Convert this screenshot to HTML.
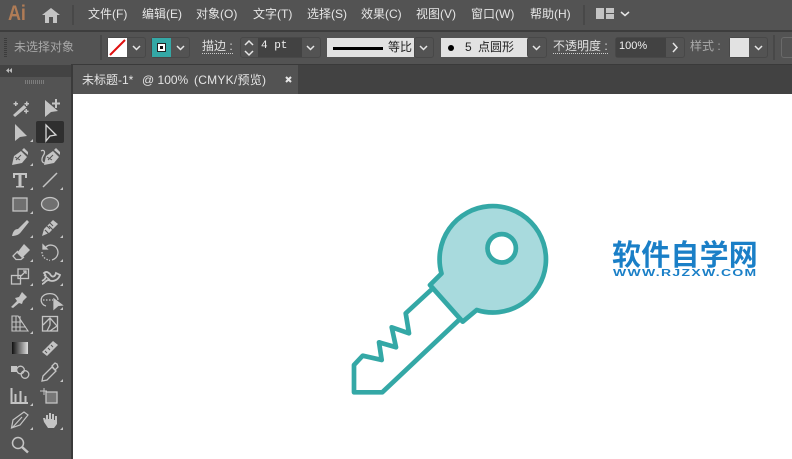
<!DOCTYPE html>
<html><head><meta charset="utf-8">
<style>
*{box-sizing:border-box}
html,body{margin:0;padding:0}
body{width:792px;height:459px;overflow:hidden;background:#fff;position:relative;font-family:"Liberation Sans","Noto Sans CJK SC",sans-serif;font-size:12px;color:#e6e6e6}
.a{position:absolute}
.t{position:absolute;white-space:nowrap;line-height:16px}
.box{position:absolute;border:1px solid #484848;border-radius:3px;background:#535353}
.lt{position:absolute;background:#e2e2e2}
.dk{position:absolute;background:#424242}
.sep{position:absolute;width:1px;background:#484848}
svg.i{position:absolute;left:0;top:0}
</style></head><body>
<div class="a" style="left:0;top:0;width:792px;height:30px;background:#535353"></div>
<div class="a" style="left:0;top:30px;width:792px;height:2px;background:#3d3d3d"></div>
<div class="a" style="left:0;top:32px;width:792px;height:32px;background:#535353"></div>
<div class="a" style="left:0;top:64px;width:792px;height:30px;background:#424242;border-top:1px solid #3a3a3a"></div>
<div class="a" style="left:73px;top:94px;width:719px;height:365px;background:#fff"></div>
<div class="a" style="left:0;top:64px;width:71px;height:395px;background:#535353"></div>
<div class="a" style="left:0;top:65px;width:71px;height:12px;background:#434343"></div>
<div class="a" style="left:71px;top:64px;width:2px;height:395px;background:#3a3a3a"></div>
<div class="a" style="left:73px;top:65px;width:225px;height:29px;background:#535353"></div>

<div class="t" style="left:8px;top:1px;font-size:21px;line-height:26px;font-weight:bold;color:#b07c56;transform:scaleX(.85);transform-origin:0 0">Ai</div>
<div class="t" style="left:88px;top:6px">文件(F)</div>
<div class="t" style="left:142px;top:6px">编辑(E)</div>
<div class="t" style="left:196px;top:6px">对象(O)</div>
<div class="t" style="left:253px;top:6px">文字(T)</div>
<div class="t" style="left:307px;top:6px">选择(S)</div>
<div class="t" style="left:361px;top:6px">效果(C)</div>
<div class="t" style="left:416px;top:6px">视图(V)</div>
<div class="t" style="left:471px;top:6px">窗口(W)</div>
<div class="t" style="left:530px;top:6px">帮助(H)</div>
<div class="sep" style="left:72px;top:5px;height:20px;width:2px"></div>
<div class="sep" style="left:583px;top:5px;height:20px;width:2px"></div>
<div class="lt" style="left:596px;top:8px;width:8px;height:11px;background:#c4c4c4"></div>
<div class="lt" style="left:606px;top:8px;width:8px;height:5px;background:#c4c4c4"></div>
<div class="lt" style="left:606px;top:14px;width:8px;height:5px;background:#c4c4c4"></div>

<div class="t" style="left:14px;top:39px;color:#a8a8a8">未选择对象</div>
<div class="sep" style="left:100px;top:35px;height:25px;width:2px"></div>
<div class="box" style="left:107px;top:37px;width:39px;height:21px"></div>
<div class="a" style="left:108px;top:38px;width:19px;height:19px;background:#fff"></div>
<div class="box" style="left:151px;top:37px;width:39px;height:21px"></div>
<div class="a" style="left:152px;top:38px;width:19px;height:19px;background:#34a8a6"></div>
<div class="a" style="left:158px;top:44px;width:7px;height:7px;background:#111;border:2px solid #fff;outline:1px solid #222"></div>
<div class="t" style="left:202px;top:39px;color:#e0e0e0;border-bottom:1px dotted #ccc;line-height:14px">描边 :</div>
<div class="box" style="left:240px;top:37px;width:81px;height:21px"></div>
<div class="dk" style="left:258px;top:38px;width:44px;height:19px"></div>
<div class="t" style="left:261px;top:38px;font-family:'Liberation Mono',monospace;font-size:11px;color:#f0f0f0">4 pt</div>
<div class="lt" style="left:327px;top:38px;width:87px;height:19px"></div>
<div class="a" style="left:333px;top:47px;width:50px;height:3px;background:#000"></div>
<div class="t" style="left:388px;top:39px;color:#222;font-size:12px;line-height:16px">等比</div>
<div class="box" style="left:414px;top:37px;width:20px;height:21px"></div>
<div class="lt" style="left:441px;top:38px;width:87px;height:19px"></div>
<div class="a" style="left:448px;top:45px;width:6px;height:6px;border-radius:50%;background:#000"></div>
<div class="t" style="left:465px;top:39px;color:#222;font-size:12px;line-height:16px;word-spacing:3px">5 点圆形</div>
<div class="box" style="left:527px;top:37px;width:20px;height:21px"></div>
<div class="t" style="left:553px;top:39px;color:#e0e0e0;border-bottom:1px dotted #ccc;line-height:14px">不透明度 :</div>
<div class="box" style="left:615px;top:37px;width:70px;height:21px"></div>
<div class="dk" style="left:616px;top:38px;width:50px;height:19px"></div>
<div class="t" style="left:619px;top:38px;font-size:11px;color:#f0f0f0">100%</div>
<div class="t" style="left:690px;top:39px;color:#a8a8a8;line-height:14px">样式 :</div>
<div class="box" style="left:729px;top:37px;width:39px;height:21px"></div>
<div class="lt" style="left:730px;top:38px;width:19px;height:19px"></div>
<div class="sep" style="left:773px;top:35px;height:25px;width:2px"></div>
<div class="box" style="left:781px;top:37px;width:20px;height:21px;background:none;border-color:#6a6a6a"></div>

<div class="t" style="left:82px;top:72px;color:#e4e4e4">未标题-1*</div>
<div class="t" style="left:142px;top:72px;color:#e4e4e4">@ 100%</div>
<div class="t" style="left:194px;top:72px;color:#e4e4e4;letter-spacing:.25px">(CMYK/预览)</div>

<svg class="i" width="792" height="459" viewBox="0 0 792 459" fill="none">
<path d="M42 15 51 8 60 15H57V23H53V17H49V23H45V15Z" fill="#c4c4c4"/>
<g stroke="#e6e6e6" stroke-width="1.500">
<path d="M621 12 625 15.500 629 12"/>
<path d="M133 46 136.500 49.500 140 46"/><path d="M177 46 180.500 49.500 184 46"/>
<path d="M307 46 310.500 49.500 314 46"/><path d="M420 46 423.500 49.500 427 46"/>
<path d="M533 46 536.500 49.500 540 46"/><path d="M755 46 758.500 49.500 762 46"/>
<path d="M245 45 249 41 253 45"/><path d="M245 51 249 55 253 51"/>
<path d="M673 43 677 47.500 673 52"/>
</g>
<path d="M110 55 125 40" stroke="#e01010" stroke-width="2"/>
<path d="M286 77 291 82M291 77 286 82" stroke="#e6e6e6" stroke-width="2"/>
<path d="M4 38.500H7M4 40.500H7M4 42.500H7M4 44.500H7M4 46.500H7M4 48.500H7M4 50.500H7M4 52.500H7M4 54.500H7M4 56.500H7" stroke="#3c3c3c"/>
<path d="M25.500 80V84M27.500 80V84M29.500 80V84M31.500 80V84M33.500 80V84M35.500 80V84M37.500 80V84M39.500 80V84M41.500 80V84M43.500 80V84" stroke="#7c7c7c"/>
<path d="M9 68 6 70.500 9 73ZM12 68 9 70.500 12 73Z" fill="#bbb"/>

<rect x="36" y="121" width="28" height="22" rx="2" fill="#2f2f2f"/>
<g fill="#c4c4c4">
<path d="M13 115 24 105 26.500 107.500 15 117Z"/>
<path d="M15 101.500h1.500v1.500h1.500v1.500h-1.500v1.500h-1.500v-1.500h-1.500v-1.500h1.500ZM26 101.500h1.500v1.500h1.500v1.500h-1.500v1.500h-1.500v-1.500h-1.500v-1.500h1.500ZM25.500 109h1.500v1.500h1.500v1.500h-1.500v1.500h-1.500v-1.500h-1.500v-1.500h1.500Z"/>
<path d="M45 100 58 111 51 112 45 117Z"/>
<path d="M55 99H57V102.500H60V104.500H57V108H55V104.500H52V102.500H55Z"/>
<path d="M15 124 27 136 20 137 15 141Z"/>
<path d="M12 165 14 156 21 151 27 157 22 163Z"/><path d="M22 150 24 148 28 152 28 155 Z"/>
<path d="M44 165 46 156 53 151 59 157 54 163Z"/><path d="M54 150 56 148 60 152 60 155 Z"/>
<path d="M13 173H27V178H25V175H21.500V186H24V187.500H16V186H18.500V175H15V178H13Z"/>
<path d="M12 236C13 231 15 229 18 229L27 220 29 222 21 232C19 235 15 236 12 236Z"/>
<path d="M42 236 44 229 53 220 58 224 49 233Z"/>
<path d="M17 253 24 244 30 250 22 258Z"/>
<path d="M11 307 17 301 15 298 19 297 22 292 27 297 23 301 22 304 19 303 13 308Z"/>
<path d="M12 342H28V354H12Z" fill="url(#gr)"/>
<path d="M42 352 53 341 58 345 47 356Z"/>
<path d="M11 366H17V372H11Z"/>
<path d="M44 422 43 418 45 418 46 420V415H48V419H49V413H51V419H52V414H54V420H55V416H57V424L54 428H48Z"/>
</g>
<defs><linearGradient id="gr"><stop offset="0" stop-color="#111"/><stop offset="1" stop-color="#ddd"/></linearGradient></defs>
<path d="M46 225 50 229M49 222 53 226" stroke="#535353"/>
<path d="M45 230 49 234M49 226 53 230" stroke="#535353" stroke-width="1.200"/>
<path d="M45 351 47 353M48 348 50 350M51 345 53 347" stroke="#535353"/>
<path d="M15 157 20 160M47 157 52 160" stroke="#535353"/>
<path d="M16 160 21 155M48 160 53 155" stroke="#535353" stroke-width="1"/>
<g stroke="#c4c4c4" stroke-width="1.300">
<path d="M46 125 56 135 50 136 46 141Z" stroke="#d8d8d8" fill="#2f2f2f"/>
<path d="M43 187 57 173" stroke-width="1.500"/>
<path d="M41 151C44 149 46 152 43 156 41 160 42 163 45 163"/>
<rect x="13" y="198" width="14" height="13" fill="#707070"/>
<ellipse cx="50" cy="204" rx="8.500" ry="6.500" fill="#707070"/>
<path d="M18 251 13 256 16 259.500H21L24 257" />
<path d="M46 247C49 244 57 244 58 252 58 257 55 259 52 260" /><path d="M43 245 47 249 H43Z" fill="#c4c4c4"/>
<path d="M42 252C42 256 44 259 50 260.500" stroke-dasharray="1.500 1.500"/>
<rect x="11.500" y="275.500" width="9" height="8.500"/><rect x="18" y="269" width="10.500" height="9.500"/>
<path d="M21 276 26 271M23 271H26V274"/>
<path d="M42 281C46 279 47 276 44 273 46 271 48 272 50 274 52 278 55 277 56 273 L60 275 C58 281 52 282 48 280 45 281 44 284 42 284" stroke-width="1.800"/>
<path d="M44 275 50 280"/>
<path d="M46 306C42 305 40 301 42 297 45 293 54 292 57 297 58 298 58 299 58 300"/>
<path d="M43 300H53" stroke-dasharray="1.500 1.500"/>
<path d="M54 299 62 305 58 305.500 54 309Z" fill="#c4c4c4"/>
<path d="M12 331V316H18L28 331ZM12 327H26M12 322H22M16 316V331M20 316V331" stroke-width="1.100"/>
<rect x="42.500" y="316.500" width="15" height="14.500"/><path d="M43 325 50 318 57 326 50 331M47 331 50 325 50 318"/>
<circle cx="20.500" cy="370" r="3.800"/><circle cx="25" cy="374.500" r="3.800"/>
<path d="M42 381 43 376 52 367 56 371 47 380ZM52 366 55 363 57 364 58 367 55 370Z"/>
<path d="M11.500 388V403H28M15.500 394V402M20.500 391V402M25.500 396V402" stroke-width="2"/>
<path d="M40 391H47M44 388V395" stroke-width="1"/><rect x="46" y="392" width="11" height="11" fill="#777"/>
<path d="M11.500 428 13 420 24 412 28 415 20 425ZM12 428 22 417" stroke-width="1.200"/>
<circle cx="18" cy="443" r="5.500" stroke-width="1.500"/><path d="M22 447 28 452.500" stroke-width="2.500"/>
</g>
<g stroke="#34a8a6" stroke-width="4.700" stroke-linejoin="round" stroke-linecap="round">
<path d="M441.500 273.500A53.200 53.200 0 1 1 476.700 310L462.700 321.700 430 285Z" fill="#a8dadd"/>
<circle cx="501.700" cy="248.300" r="14.200" fill="#fff"/>
<path d="M431.700 289.300 405.700 313.300 409 333.300 391.700 327.300 396 347.300 379 342.300 381.700 360 362.700 355.700 354 365V392.300H382.300L460 319"/>
</g>
<g fill="#c4c4c4">
<path d="M33 139V142H30Z"/><path d="M33 163V166H30Z"/><path d="M33 187V190H30Z"/><path d="M63 187V190H60Z"/>
<path d="M33 211V214H30Z"/><path d="M33 235V238H30Z"/><path d="M63 235V238H60Z"/><path d="M33 259V262H30Z"/><path d="M63 259V262H60Z"/>
<path d="M33 283V286H30Z"/><path d="M63 283V286H60Z"/><path d="M33 307V310H30Z"/><path d="M63 307V310H60Z"/>
<path d="M33 331V334H30Z"/><path d="M63 379V382H60Z"/><path d="M33 403V406H30Z"/><path d="M33 427V430H30Z"/><path d="M63 427V430H60Z"/>
</g>
</svg>

<div class="t" style="left:612px;top:236px;font-size:29px;line-height:34px;font-weight:bold;color:#1a7fc7;font-family:'Noto Sans CJK SC',sans-serif;letter-spacing:.2px">软件自学网</div>
<div class="t" style="left:613px;top:267px;font-size:10.500px;line-height:13px;font-weight:bold;color:#1a7fc7;letter-spacing:1px;transform:scaleX(1.330);transform-origin:0 0">WWW.RJZXW.COM</div>
</body></html>
